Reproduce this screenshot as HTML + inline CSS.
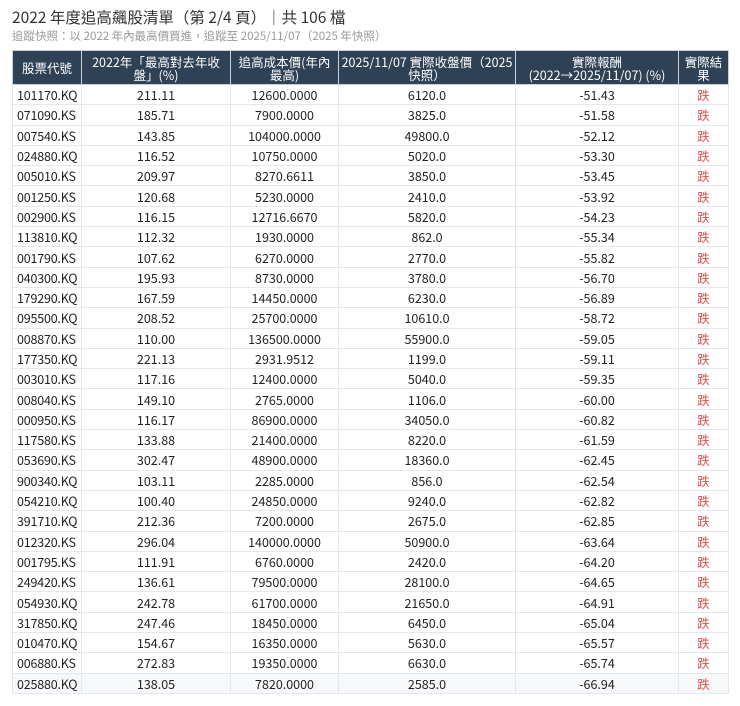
<!DOCTYPE html>
<html><head><meta charset="utf-8"><style>
body{margin:0;background:#fff;font-family:"Noto Sans CJK TC",sans-serif;color:#222;}
h1{position:absolute;left:12px;top:7px;margin:0;font-size:15.5px;font-weight:normal;color:#333;line-height:20px;white-space:nowrap}
.sub{position:absolute;left:12px;top:29px;font-size:11.5px;color:#999;line-height:14px;white-space:nowrap}
table{position:absolute;left:12px;top:50px;border-collapse:collapse;table-layout:fixed;width:716px;font-size:12.5px}
th{background:#2e4155;color:#fff;font-weight:normal;height:33px;padding:0;line-height:13px;border:1px solid #c9d0d8;font-size:12.5px;white-space:nowrap;overflow:hidden}
td{height:19.3px;padding:0 3px;border:1px solid #e4e7eb;text-align:center;line-height:19px;overflow:hidden;white-space:nowrap}
td:first-child{text-align:left;padding-left:4px;letter-spacing:-0.2px}
td:last-child{color:#d9534f}
</style></head><body>
<h1>2022 年度追高飆股清單（第 2/4 頁）｜共 106 檔</h1>
<div class="sub">追蹤快照：以 2022 年內最高價買進，追蹤至 2025/11/07（2025 年快照）</div>
<table>
<colgroup><col style="width:69px"><col style="width:149px"><col style="width:108px"><col style="width:177px"><col style="width:163px"><col style="width:50px"></colgroup>
<tr><th>股票代號</th><th>2022年「最高對去年收<br>盤」(%)</th><th>追高成本價(年內<br>最高)</th><th>2025/11/07 實際收盤價（2025<br>快照）</th><th>實際報酬<br>(2022→2025/11/07) (%)</th><th>實際結<br>果</th></tr>
<tr><td>101170.KQ</td><td>211.11</td><td>12600.0000</td><td>6120.0</td><td>-51.43</td><td>跌</td></tr>
<tr><td>071090.KS</td><td>185.71</td><td>7900.0000</td><td>3825.0</td><td>-51.58</td><td>跌</td></tr>
<tr><td>007540.KS</td><td>143.85</td><td>104000.0000</td><td>49800.0</td><td>-52.12</td><td>跌</td></tr>
<tr><td>024880.KQ</td><td>116.52</td><td>10750.0000</td><td>5020.0</td><td>-53.30</td><td>跌</td></tr>
<tr><td>005010.KS</td><td>209.97</td><td>8270.6611</td><td>3850.0</td><td>-53.45</td><td>跌</td></tr>
<tr><td>001250.KS</td><td>120.68</td><td>5230.0000</td><td>2410.0</td><td>-53.92</td><td>跌</td></tr>
<tr><td>002900.KS</td><td>116.15</td><td>12716.6670</td><td>5820.0</td><td>-54.23</td><td>跌</td></tr>
<tr><td>113810.KQ</td><td>112.32</td><td>1930.0000</td><td>862.0</td><td>-55.34</td><td>跌</td></tr>
<tr><td>001790.KS</td><td>107.62</td><td>6270.0000</td><td>2770.0</td><td>-55.82</td><td>跌</td></tr>
<tr><td>040300.KQ</td><td>195.93</td><td>8730.0000</td><td>3780.0</td><td>-56.70</td><td>跌</td></tr>
<tr><td>179290.KQ</td><td>167.59</td><td>14450.0000</td><td>6230.0</td><td>-56.89</td><td>跌</td></tr>
<tr><td>095500.KQ</td><td>208.52</td><td>25700.0000</td><td>10610.0</td><td>-58.72</td><td>跌</td></tr>
<tr><td>008870.KS</td><td>110.00</td><td>136500.0000</td><td>55900.0</td><td>-59.05</td><td>跌</td></tr>
<tr><td>177350.KQ</td><td>221.13</td><td>2931.9512</td><td>1199.0</td><td>-59.11</td><td>跌</td></tr>
<tr><td>003010.KS</td><td>117.16</td><td>12400.0000</td><td>5040.0</td><td>-59.35</td><td>跌</td></tr>
<tr><td>008040.KS</td><td>149.10</td><td>2765.0000</td><td>1106.0</td><td>-60.00</td><td>跌</td></tr>
<tr><td>000950.KS</td><td>116.17</td><td>86900.0000</td><td>34050.0</td><td>-60.82</td><td>跌</td></tr>
<tr><td>117580.KS</td><td>133.88</td><td>21400.0000</td><td>8220.0</td><td>-61.59</td><td>跌</td></tr>
<tr><td>053690.KS</td><td>302.47</td><td>48900.0000</td><td>18360.0</td><td>-62.45</td><td>跌</td></tr>
<tr><td>900340.KQ</td><td>103.11</td><td>2285.0000</td><td>856.0</td><td>-62.54</td><td>跌</td></tr>
<tr><td>054210.KQ</td><td>100.40</td><td>24850.0000</td><td>9240.0</td><td>-62.82</td><td>跌</td></tr>
<tr><td>391710.KQ</td><td>212.36</td><td>7200.0000</td><td>2675.0</td><td>-62.85</td><td>跌</td></tr>
<tr><td>012320.KS</td><td>296.04</td><td>140000.0000</td><td>50900.0</td><td>-63.64</td><td>跌</td></tr>
<tr><td>001795.KS</td><td>111.91</td><td>6760.0000</td><td>2420.0</td><td>-64.20</td><td>跌</td></tr>
<tr><td>249420.KS</td><td>136.61</td><td>79500.0000</td><td>28100.0</td><td>-64.65</td><td>跌</td></tr>
<tr><td>054930.KQ</td><td>242.78</td><td>61700.0000</td><td>21650.0</td><td>-64.91</td><td>跌</td></tr>
<tr><td>317850.KQ</td><td>247.46</td><td>18450.0000</td><td>6450.0</td><td>-65.04</td><td>跌</td></tr>
<tr><td>010470.KQ</td><td>154.67</td><td>16350.0000</td><td>5630.0</td><td>-65.57</td><td>跌</td></tr>
<tr><td>006880.KS</td><td>272.83</td><td>19350.0000</td><td>6630.0</td><td>-65.74</td><td>跌</td></tr>
<tr style="background:#f7f8fa"><td>025880.KQ</td><td>138.05</td><td>7820.0000</td><td>2585.0</td><td>-66.94</td><td>跌</td></tr>
</table>
</body></html>
